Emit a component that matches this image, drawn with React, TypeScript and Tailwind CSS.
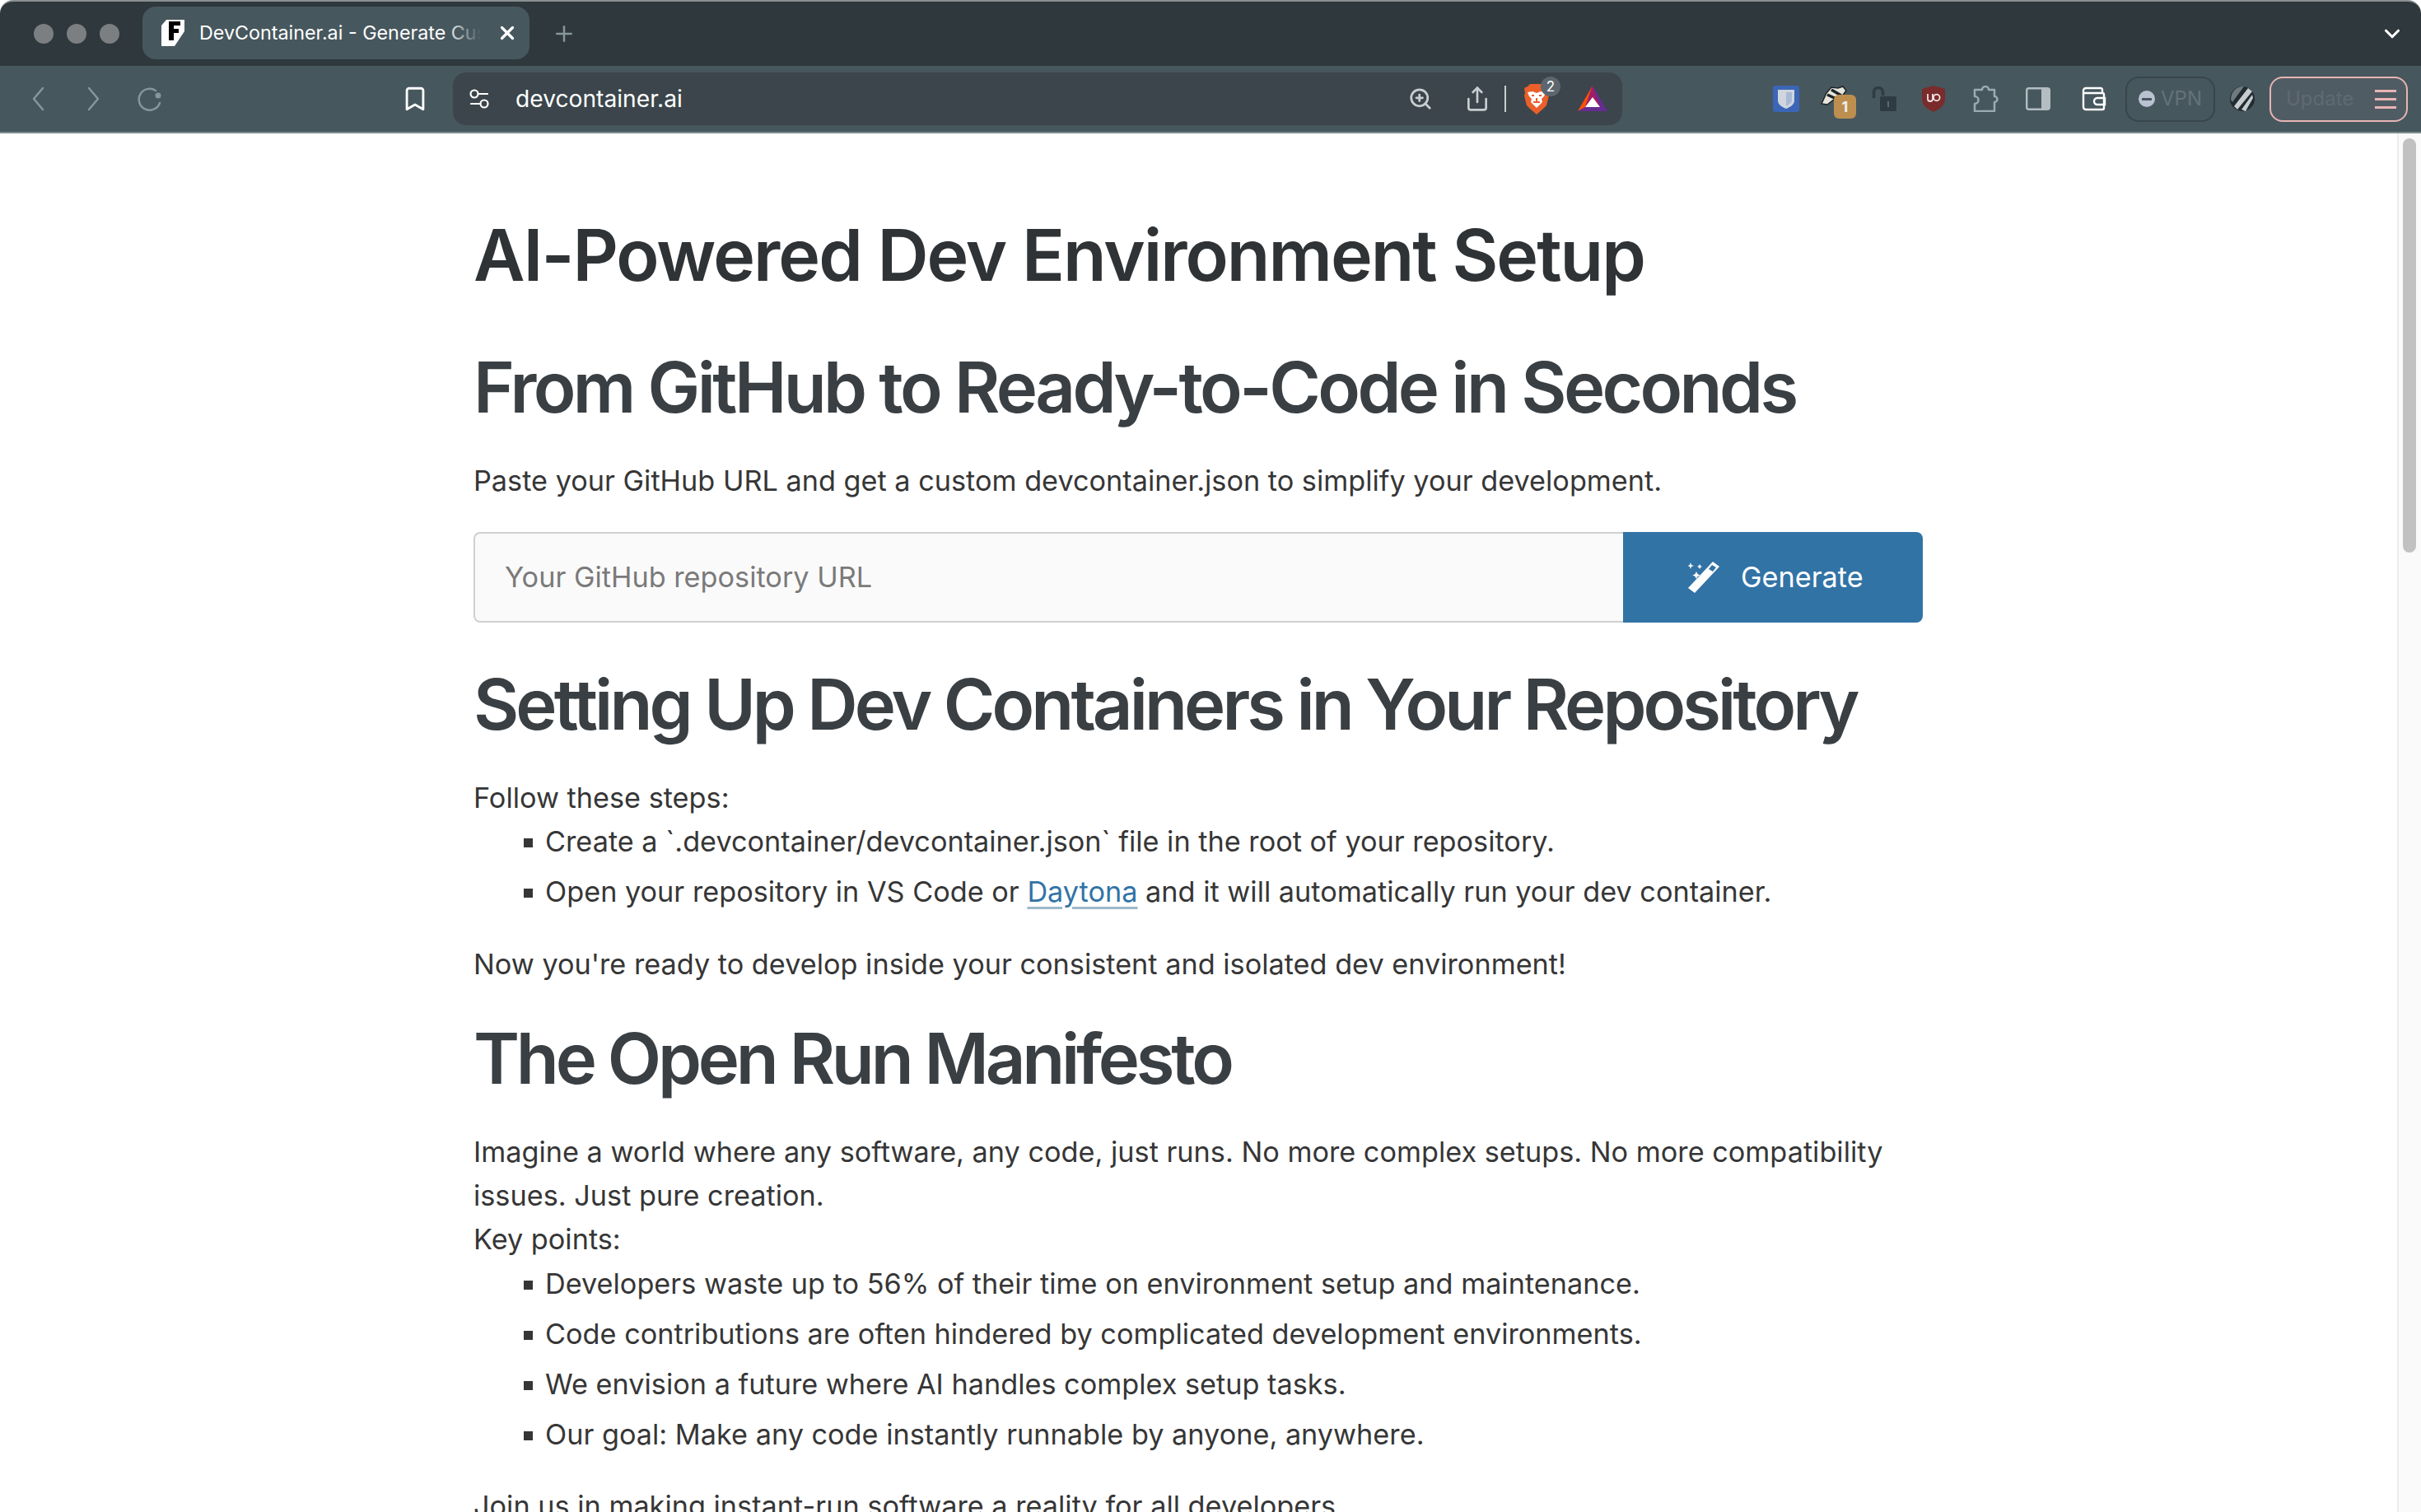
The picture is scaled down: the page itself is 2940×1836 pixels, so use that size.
import { Share, ZoomIn, ChevronDown, Plus, X, Bookmark } from "lucide-react";

function Favicon() {
  return (
    <svg width="28" height="32" viewBox="0 0 28 32" className="shrink-0">
      <path d="M0 7L6 0H28V14L16 32H0z" fill="#fff" />
      <path d="M9 2H23V7H15V11H21V16H15V25H9z" fill="#000" />
    </svg>
  );
}

function BackForward({ flip }: { flip?: boolean }) {
  return (
    <svg width="16" height="30" viewBox="0 0 16 30" className={flip ? "rotate-180" : ""} fill="none">
      <path d="M14 2L3 15l11 13" stroke="#87969c" strokeWidth="2.5" strokeLinecap="round" strokeLinejoin="round" />
    </svg>
  );
}

function Reload() {
  return (
    <svg width="32" height="32" viewBox="0 0 32 32" fill="none">
      <path d="M24 6A13 13 0 1 0 29 21" stroke="#87969c" strokeWidth="2.5" strokeLinecap="round" />
      <circle cx="27" cy="12" r="3.500" fill="#87969c" />
    </svg>
  );
}

function SiteIcon() {
  return (
    <svg width="26" height="26" viewBox="0 0 26 26" fill="none" stroke="#fff" strokeWidth="2.2">
      <circle cx="7" cy="7" r="4.5" />
      <path d="M12 7h11M3 19h11" strokeLinecap="round" />
      <circle cx="19" cy="19" r="4.5" />
    </svg>
  );
}

function Brave() {
  return (
    <div className="relative w-[30px] h-[37px]">
      <svg width="30" height="37" viewBox="0 0 30 37">
        <path d="M7 0h16l3 3 4 2-1 6 1 3-3 12-5 5-7 6-7-6-5-5L0 14l1-3-1-6 4-2z" fill="#ea5f2a" />
        <path d="M4 10l6-1 5 2 5-2 6 1-2 5-3 3 1 4-7 7-7-7 1-4-3-3z" fill="#fff" />
        <path d="M9 14h3M18 14h3M15 17v4M11 22h8" stroke="#ea5f2a" strokeWidth="2" />
      </svg>
      <span className="absolute -top-[9px] -right-[14px] w-[24px] h-[24px] rounded-full bg-[#5d666e] text-white text-[17px] leading-[24px] text-center">
        2
      </span>
    </div>
  );
}

function Bat() {
  return (
    <svg width="38" height="32" viewBox="0 0 38 32">
      <path d="M19 0l18 31H1z" fill="#662d91" />
      <path d="M19 0L1 31l9-5z" fill="#ff5000" />
      <path d="M19 0l-9 26h18z" fill="#9e1f63" />
      <path d="M19 14l-9 12h18z" fill="#fff" />
      <path d="M1 31l9-5h18l9 5z" fill="#662d91" />
    </svg>
  );
}

function Bitwarden() {
  return (
    <svg width="32" height="32" viewBox="0 0 32 32">
      <rect width="32" height="32" rx="3" fill="#3b66b8" />
      <path d="M6 5h20v13c0 5-5 8-10 10-5-2-10-5-10-10z" fill="#cfd6de" />
      <path d="M16 8h7v10c0 3-4 5-7 7z" fill="#3b66b8" opacity="0.25" />
    </svg>
  );
}

function Badger() {
  return (
    <div className="relative w-[32px] h-[32px]">
      <svg width="32" height="24" viewBox="0 0 32 24">
        <path d="M1 22L7 9l6-7 8 1 6-2 4 5-6 8-9 3-8 6z" fill="#e6e6de" stroke="#1f2426" strokeWidth="1.5" />
        <path d="M8 11l11 5M13 5l12 7" stroke="#1f2426" strokeWidth="3.500" />
      </svg>
      <span className="absolute top-[11px] left-[16px] w-[27px] h-[29px] rounded-[6px] bg-[#bd8f4e] text-[#eee] text-[18px] font-bold leading-[29px] text-center">
        1
      </span>
    </div>
  );
}

function OpenLock() {
  return (
    <svg width="30" height="30" viewBox="0 0 30 30">
      <path d="M2.500 14V7a5.500 5.500 0 0 1 11 0v4" fill="none" stroke="#2f3b42" strokeWidth="3.500" />
      <rect x="10" y="12" width="20" height="18" rx="1.500" fill="#2f3b42" />
      <rect x="19" y="18" width="2" height="7" fill="#5d6a70" />
    </svg>
  );
}

function UBlock() {
  return (
    <svg width="30" height="32" viewBox="0 0 30 32">
      <path d="M15 0l14 4v12c0 8-6 12-14 16C7 28 1 24 1 16V4z" fill="#7a2b2b" />
      <path d="M8 10v6a3 3 0 0 0 6 0v-6M15 14.500a3.800 3.800 0 1 0 7.600 0 3.800 3.800 0 1 0-7.600 0" fill="none" stroke="#f0e6e6" strokeWidth="1.800" />
    </svg>
  );
}

function PuzzlePiece() {
  return (
    <svg width="32" height="32" viewBox="0 0 32 32" fill="none">
      <path
        d="M3 5H12a4 4 0 0 1 8 0H27V13a3.500 3.500 0 0 1 0 7V31H3V22a4.500 4.500 0 0 0 0-9z"
        stroke="#9aabb4"
        strokeWidth="2.500"
        strokeLinejoin="round"
      />
    </svg>
  );
}

function Sidebar() {
  return (
    <svg width="30" height="28" viewBox="0 0 30 28">
      <rect x="1.200" y="1.200" width="27.600" height="25.600" rx="2.500" fill="none" stroke="#b4bdc1" strokeWidth="2.400" />
      <rect x="19" y="1" width="10" height="26" rx="2" fill="#b4bdc1" />
    </svg>
  );
}

function Wallet() {
  return (
    <svg width="30" height="30" viewBox="0 0 30 30" fill="none" stroke="#fff" strokeWidth="2.400">
      <path d="M25 8V4a2 2 0 0 0-2-2H5a3 3 0 0 0-3 3v20a3 3 0 0 0 3 3h20a2 2 0 0 0 2-2V10a2 2 0 0 0-2-2H2" />
      <path d="M28 14h-9a4 4 0 0 0 0 8h9z" />
    </svg>
  );
}

function Leo() {
  return (
    <svg width="30" height="32" viewBox="0 0 30 32">
      <circle cx="15" cy="16" r="15" fill="#222b30" />
      <path d="M16 1C7 1 1 8 1 17l2 3L17 1z" fill="#6e7a80" />
      <path d="M22 3L5 25l4 4L27 7zM27 11L14 29l5 2 9-16z" fill="#c6cdd1" />
    </svg>
  );
}

function Wand() {
  return (
    <svg width="38" height="38" viewBox="0 0 38 38" fill="#fff">
      <path d="M30 0l8 6L8 38l-8-6z" />
      <path d="M29 4l5 3-4 5-5-3z" fill="#3273a6" />
      <path d="M3 1l1 3 3 1-3 1-1 3-1-3-3-1 3-1zM14 3l1 2 2 1-2 1-1 2-1-2-2-1 2-1zM10 12l1.500 3 3 1.500-3 1.500-1.500 3-1.500-3-3-1.500 3-1.500z" />
    </svg>
  );
}

function Li({ children }: { children: React.ReactNode }) {
  return (
    <li className="flex items-center h-[53px] mb-[8px]">
      <span className="w-[11px] h-[11px] bg-[#363636] mr-[15px] mt-[3px] shrink-0" />
      <span>{children}</span>
    </li>
  );
}

export default function App() {
  return (
    <div className="w-[2940px] h-[1836px] overflow-hidden flex flex-col bg-white font-['Inter',sans-serif] text-[#363636]">
      {/* title bar */}
      <div className="h-[80px] bg-[#2e383d] border-t-2 border-[#8a8f92] rounded-t-[16px] flex items-center relative shrink-0">
        <div className="flex gap-[16px] ml-[41px]">
          <span className="w-[24px] h-[24px] rounded-full bg-[#7b7f82]" />
          <span className="w-[24px] h-[24px] rounded-full bg-[#7b7f82]" />
          <span className="w-[24px] h-[24px] rounded-full bg-[#7b7f82]" />
        </div>
        <div className="ml-[28px] w-[470px] h-[64px] mt-[-2px] rounded-[16px] bg-[#47575e] flex items-center pl-[23px] relative">
          <Favicon />
          <div className="ml-[18px] w-[342px] overflow-hidden whitespace-nowrap text-white text-[23.3px] relative">
            DevContainer.ai - Generate Custom Dev Environments
            <div className="absolute right-0 top-0 bottom-0 w-[44px] bg-gradient-to-r from-transparent to-[#47575e]" />
          </div>
          <X size={26} color="#fff" strokeWidth={3} className="ml-[19px]" />
        </div>
        <Plus size={30} color="#87969c" strokeWidth={2} className="ml-[27px]" />
        <ChevronDown size={30} color="#fff" strokeWidth={2.5} className="ml-auto mr-[20px]" />
      </div>

      {/* toolbar */}
      <div className="h-[82px] bg-[#47575e] border-b-2 border-[#7d8c8c] flex items-center shrink-0">
        <div className="ml-[38px]"><BackForward /></div>
        <div className="ml-[52px]"><BackForward flip /></div>
        <div className="ml-[43px]"><Reload /></div>
        <Bookmark size={34} color="#fff" strokeWidth={2} className="ml-[290px]" />
        <div className="ml-[29px] w-[1420px] h-[64px] rounded-[16px] bg-[#3b454b] flex items-center pl-[19px]">
          <SiteIcon />
          <span className="ml-[31px] text-white text-[28.2px]">devcontainer.ai</span>
          <ZoomIn size={30} color="#c8ced1" strokeWidth={2.2} className="ml-[881px]" />
          <Share size={32} color="#c8ced1" strokeWidth={2} className="ml-[38px]" />
          <span className="w-[2px] h-[32px] bg-[#c8ced1] ml-[17px]" />
          <div className="ml-[22px]"><Brave /></div>
          <div className="ml-[34px]"><Bat /></div>
        </div>
        <div className="ml-[183px]"><Bitwarden /></div>
        <div className="ml-[26px]"><Badger /></div>
        <div className="ml-[30px]"><OpenLock /></div>
        <div className="ml-[30px]"><UBlock /></div>
        <div className="ml-[32px]"><PuzzlePiece /></div>
        <div className="ml-[33px]"><Sidebar /></div>
        <div className="ml-[38px]"><Wallet /></div>
        <div className="ml-[23px] w-[109px] h-[55px] rounded-[16px] border-2 border-[#39454c] flex items-center pl-[14px]">
          <span className="w-[20px] h-[20px] rounded-full bg-[#b9c2d0] flex items-center justify-center">
            <span className="w-[12px] h-[3px] bg-[#47575e]" />
          </span>
          <span className="ml-[7px] text-[#65727a] text-[24px]">VPN</span>
        </div>
        <div className="ml-[18px]"><Leo /></div>
        <div className="ml-[18px] w-[168px] h-[55px] rounded-[16px] border-2 border-[#e8b4b4] bg-[#505c63] flex items-center pl-[18px]">
          <span className="text-[#5e6a72] text-[24px]">Update</span>
          <span className="ml-auto mr-[12px] flex flex-col gap-[7px]">
            <span className="block w-[26px] h-[3px] bg-[#e8b4b4]" />
            <span className="block w-[26px] h-[3px] bg-[#e8b4b4]" />
            <span className="block w-[26px] h-[3px] bg-[#e8b4b4]" />
          </span>
        </div>
      </div>

      {/* page + scrollbar */}
      <div className="flex flex-1 min-h-0">
        <main className="flex-1 pl-[575px] pt-[108px] overflow-hidden">
          <div className="w-[1760px] text-[34.25px] leading-[53px]">
            <h1 className="text-[86px] leading-[80px] font-[580] tracking-[-2px] text-[#2f3336]">
              AI-Powered Dev Environment Setup
            </h1>
            <h2 className="mt-[81px] text-[85px] leading-[80px] font-[580] tracking-[-3.600px] text-[#3a3f43]">
              From GitHub to Ready-to-Code in Seconds
            </h2>
            <p className="mt-[46px]">
              Paste your GitHub URL and get a custom devcontainer.json to simplify your development.
            </p>
            <div className="flex mt-[36px] h-[110px]">
              <div className="flex-1 bg-[#fafafa] border-2 border-r-0 border-[#d0d0d0] rounded-l-[8px] flex items-center pl-[36px] pb-[2px] text-[#7a7a7a]">
                Your GitHub repository URL
              </div>
              <div className="w-[364px] bg-[#3273a6] rounded-r-[8px] flex items-center text-white pl-[79px]">
                <Wand />
                <span className="ml-[26px] pb-[2px]">Generate</span>
              </div>
            </div>
            <h2 className="mt-[60px] text-[85px] leading-[80px] font-[580] tracking-[-3.950px] text-[#3a3f43]">
              Setting Up Dev Containers in Your Repository
            </h2>
            <p className="mt-[46px]">Follow these steps:</p>
            <ul className="ml-[61px]">
              <Li>Create a `.devcontainer/devcontainer.json` file in the root of your repository.</Li>
              <Li>
                Open your repository in VS Code or{" "}
                <a className="text-[#3273a6] underline underline-offset-[6px] decoration-[#9db8cc]">Daytona</a>{" "}
                and it will automatically run your dev container.
              </Li>
            </ul>
            <p className="mt-[35px]">Now you're ready to develop inside your consistent and isolated dev environment!</p>
            <h2 className="mt-[49px] text-[85px] leading-[80px] font-[580] tracking-[-4.250px] text-[#3a3f43]">
              The Open Run Manifesto
            </h2>
            <p className="mt-[46px]">
              Imagine a world where any software, any code, just runs. No more complex setups. No more compatibility
              issues. Just pure creation.
              <br />
              Key points:
            </p>
            <ul className="ml-[61px] mt-[1px]">
              <Li>Developers waste up to 56% of their time on environment setup and maintenance.</Li>
              <Li>Code contributions are often hindered by complicated development environments.</Li>
              <Li>We envision a future where AI handles complex setup tasks.</Li>
              <Li>Our goal: Make any code instantly runnable by anyone, anywhere.</Li>
            </ul>
            <p className="mt-[34px]">Join us in making instant-run software a reality for all developers.</p>
          </div>
        </main>
        <div className="w-[29px] bg-[#fafafa] border-l-2 border-[#ececec] pl-[5px] pt-[6px] shrink-0">
          <div className="w-[16px] h-[503px] rounded-full bg-[#c1c1c1]" />
        </div>
      </div>
    </div>
  );
}
